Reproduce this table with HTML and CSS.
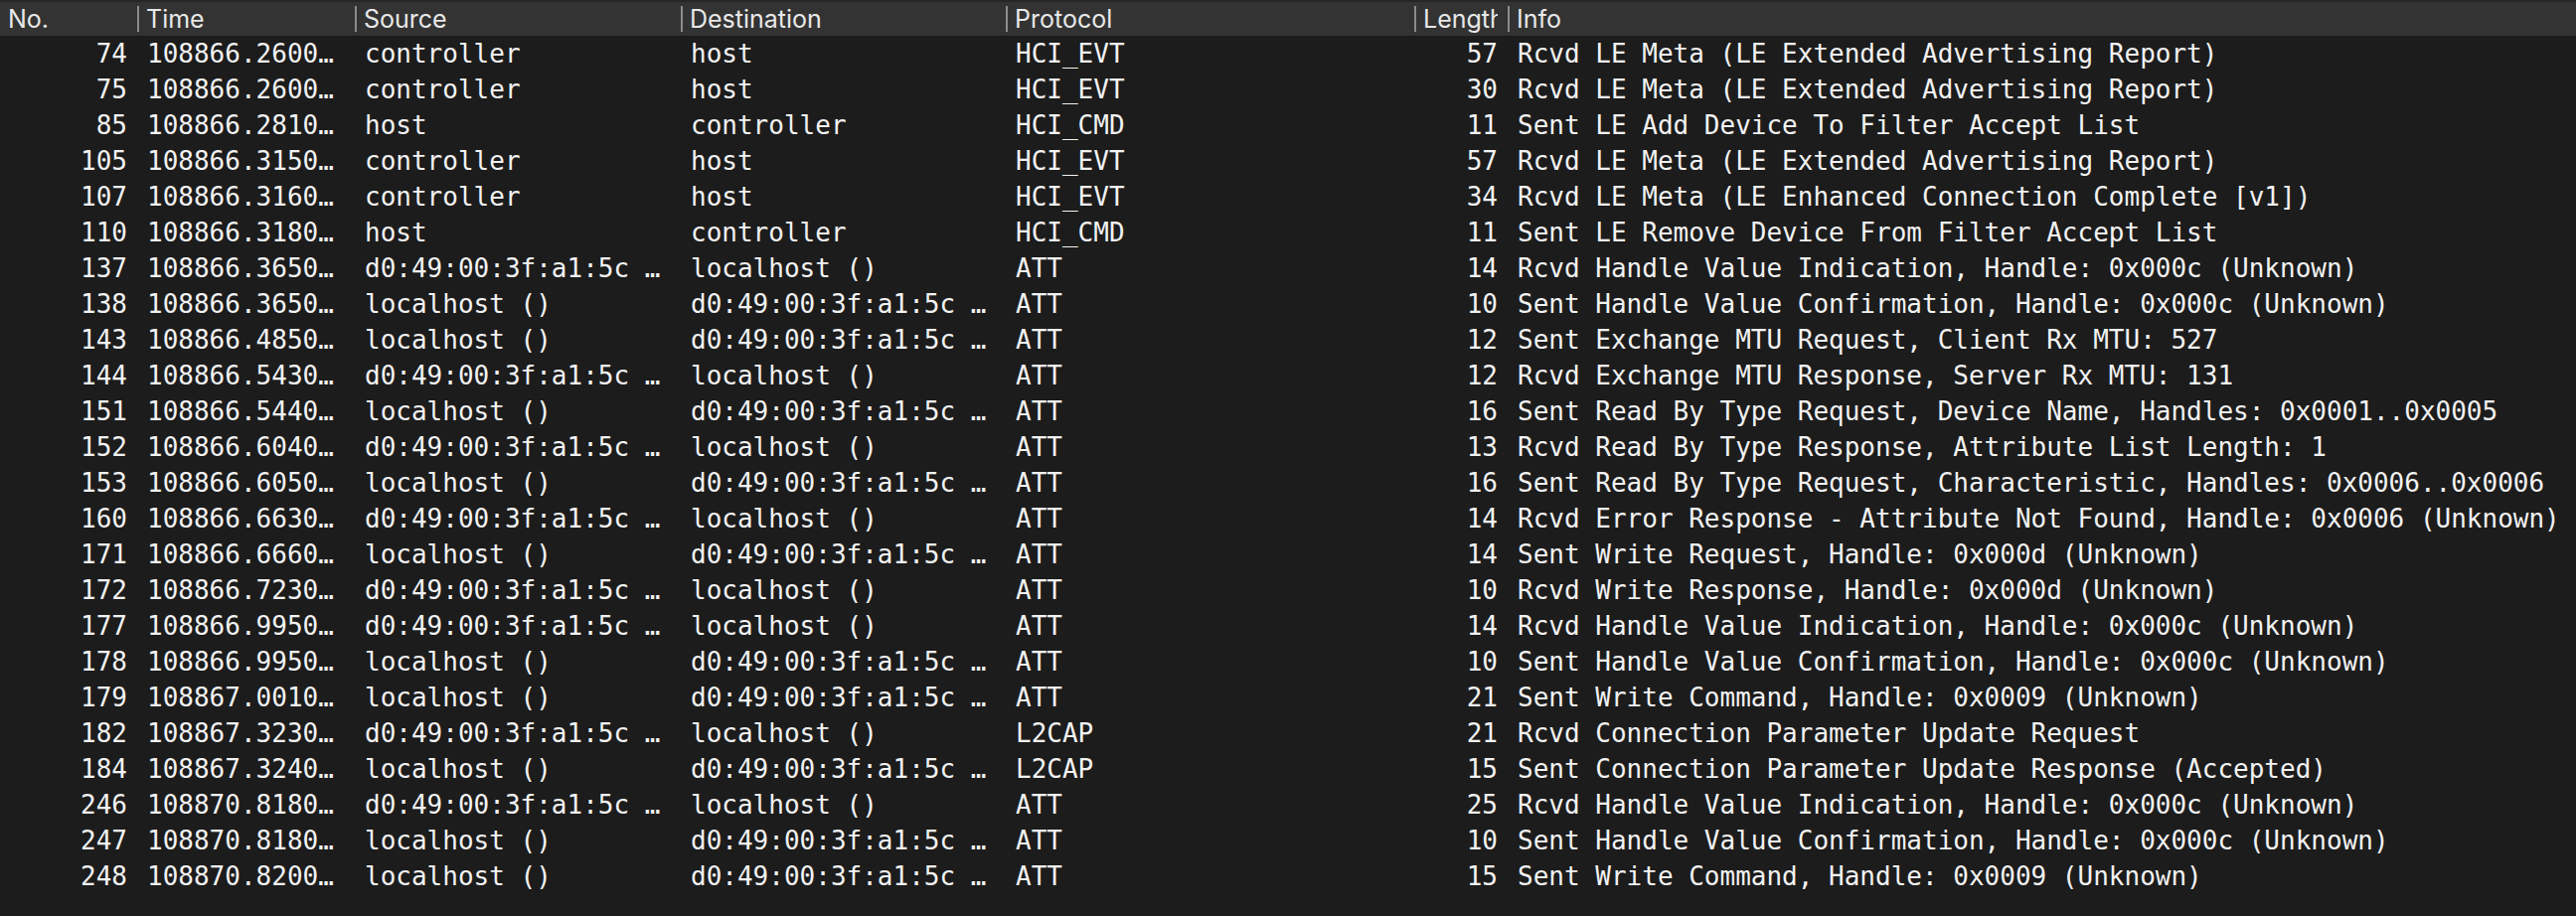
FILE: index.html
```html
<!DOCTYPE html>
<html lang="en">
<head>
<meta charset="utf-8">
<title>Packet list</title>
<link rel="stylesheet" href="styles.css">
</head>
<body>
<div class="packets">
  <div class="topline"></div>
  <div class="row head">
    <div class="h first">No.</div>
    <div class="h">Time</div>
    <div class="h">Source</div>
    <div class="h">Destination</div>
    <div class="h">Protocol</div>
    <div class="h narrow">Length</div>
    <div class="h">Info</div>
  </div>
  <div class="list">
    <div class="row"><span class="c num">74</span><span class="c">108866.2600…</span><span class="c">controller</span><span class="c">host</span><span class="c">HCI_EVT</span><span class="c num">57</span><span class="c">Rcvd LE Meta (LE Extended Advertising Report)</span></div>
    <div class="row"><span class="c num">75</span><span class="c">108866.2600…</span><span class="c">controller</span><span class="c">host</span><span class="c">HCI_EVT</span><span class="c num">30</span><span class="c">Rcvd LE Meta (LE Extended Advertising Report)</span></div>
    <div class="row"><span class="c num">85</span><span class="c">108866.2810…</span><span class="c">host</span><span class="c">controller</span><span class="c">HCI_CMD</span><span class="c num">11</span><span class="c">Sent LE Add Device To Filter Accept List</span></div>
    <div class="row"><span class="c num">105</span><span class="c">108866.3150…</span><span class="c">controller</span><span class="c">host</span><span class="c">HCI_EVT</span><span class="c num">57</span><span class="c">Rcvd LE Meta (LE Extended Advertising Report)</span></div>
    <div class="row"><span class="c num">107</span><span class="c">108866.3160…</span><span class="c">controller</span><span class="c">host</span><span class="c">HCI_EVT</span><span class="c num">34</span><span class="c">Rcvd LE Meta (LE Enhanced Connection Complete [v1])</span></div>
    <div class="row"><span class="c num">110</span><span class="c">108866.3180…</span><span class="c">host</span><span class="c">controller</span><span class="c">HCI_CMD</span><span class="c num">11</span><span class="c">Sent LE Remove Device From Filter Accept List</span></div>
    <div class="row"><span class="c num">137</span><span class="c">108866.3650…</span><span class="c">d0:49:00:3f:a1:5c …</span><span class="c">localhost ()</span><span class="c">ATT</span><span class="c num">14</span><span class="c">Rcvd Handle Value Indication, Handle: 0x000c (Unknown)</span></div>
    <div class="row"><span class="c num">138</span><span class="c">108866.3650…</span><span class="c">localhost ()</span><span class="c">d0:49:00:3f:a1:5c …</span><span class="c">ATT</span><span class="c num">10</span><span class="c">Sent Handle Value Confirmation, Handle: 0x000c (Unknown)</span></div>
    <div class="row"><span class="c num">143</span><span class="c">108866.4850…</span><span class="c">localhost ()</span><span class="c">d0:49:00:3f:a1:5c …</span><span class="c">ATT</span><span class="c num">12</span><span class="c">Sent Exchange MTU Request, Client Rx MTU: 527</span></div>
    <div class="row"><span class="c num">144</span><span class="c">108866.5430…</span><span class="c">d0:49:00:3f:a1:5c …</span><span class="c">localhost ()</span><span class="c">ATT</span><span class="c num">12</span><span class="c">Rcvd Exchange MTU Response, Server Rx MTU: 131</span></div>
    <div class="row"><span class="c num">151</span><span class="c">108866.5440…</span><span class="c">localhost ()</span><span class="c">d0:49:00:3f:a1:5c …</span><span class="c">ATT</span><span class="c num">16</span><span class="c">Sent Read By Type Request, Device Name, Handles: 0x0001..0x0005</span></div>
    <div class="row"><span class="c num">152</span><span class="c">108866.6040…</span><span class="c">d0:49:00:3f:a1:5c …</span><span class="c">localhost ()</span><span class="c">ATT</span><span class="c num">13</span><span class="c">Rcvd Read By Type Response, Attribute List Length: 1</span></div>
    <div class="row"><span class="c num">153</span><span class="c">108866.6050…</span><span class="c">localhost ()</span><span class="c">d0:49:00:3f:a1:5c …</span><span class="c">ATT</span><span class="c num">16</span><span class="c">Sent Read By Type Request, Characteristic, Handles: 0x0006..0x0006</span></div>
    <div class="row"><span class="c num">160</span><span class="c">108866.6630…</span><span class="c">d0:49:00:3f:a1:5c …</span><span class="c">localhost ()</span><span class="c">ATT</span><span class="c num">14</span><span class="c">Rcvd Error Response - Attribute Not Found, Handle: 0x0006 (Unknown)</span></div>
    <div class="row"><span class="c num">171</span><span class="c">108866.6660…</span><span class="c">localhost ()</span><span class="c">d0:49:00:3f:a1:5c …</span><span class="c">ATT</span><span class="c num">14</span><span class="c">Sent Write Request, Handle: 0x000d (Unknown)</span></div>
    <div class="row"><span class="c num">172</span><span class="c">108866.7230…</span><span class="c">d0:49:00:3f:a1:5c …</span><span class="c">localhost ()</span><span class="c">ATT</span><span class="c num">10</span><span class="c">Rcvd Write Response, Handle: 0x000d (Unknown)</span></div>
    <div class="row"><span class="c num">177</span><span class="c">108866.9950…</span><span class="c">d0:49:00:3f:a1:5c …</span><span class="c">localhost ()</span><span class="c">ATT</span><span class="c num">14</span><span class="c">Rcvd Handle Value Indication, Handle: 0x000c (Unknown)</span></div>
    <div class="row"><span class="c num">178</span><span class="c">108866.9950…</span><span class="c">localhost ()</span><span class="c">d0:49:00:3f:a1:5c …</span><span class="c">ATT</span><span class="c num">10</span><span class="c">Sent Handle Value Confirmation, Handle: 0x000c (Unknown)</span></div>
    <div class="row"><span class="c num">179</span><span class="c">108867.0010…</span><span class="c">localhost ()</span><span class="c">d0:49:00:3f:a1:5c …</span><span class="c">ATT</span><span class="c num">21</span><span class="c">Sent Write Command, Handle: 0x0009 (Unknown)</span></div>
    <div class="row"><span class="c num">182</span><span class="c">108867.3230…</span><span class="c">d0:49:00:3f:a1:5c …</span><span class="c">localhost ()</span><span class="c">L2CAP</span><span class="c num">21</span><span class="c">Rcvd Connection Parameter Update Request</span></div>
    <div class="row"><span class="c num">184</span><span class="c">108867.3240…</span><span class="c">localhost ()</span><span class="c">d0:49:00:3f:a1:5c …</span><span class="c">L2CAP</span><span class="c num">15</span><span class="c">Sent Connection Parameter Update Response (Accepted)</span></div>
    <div class="row"><span class="c num">246</span><span class="c">108870.8180…</span><span class="c">d0:49:00:3f:a1:5c …</span><span class="c">localhost ()</span><span class="c">ATT</span><span class="c num">25</span><span class="c">Rcvd Handle Value Indication, Handle: 0x000c (Unknown)</span></div>
    <div class="row"><span class="c num">247</span><span class="c">108870.8180…</span><span class="c">localhost ()</span><span class="c">d0:49:00:3f:a1:5c …</span><span class="c">ATT</span><span class="c num">10</span><span class="c">Sent Handle Value Confirmation, Handle: 0x000c (Unknown)</span></div>
    <div class="row"><span class="c num">248</span><span class="c">108870.8200…</span><span class="c">localhost ()</span><span class="c">d0:49:00:3f:a1:5c …</span><span class="c">ATT</span><span class="c num">15</span><span class="c">Sent Write Command, Handle: 0x0009 (Unknown)</span></div>
  </div>
</div>
</body>
</html>
```
FILE: styles.css
```css
html, body {
  margin: 0;
  padding: 0;
  background: #1c1c1c;
}

.packets {
  width: 2592px;
  min-height: 922px;
  background: #1c1c1c;
  color: #f2f2f2;
}

.topline {
  height: 2px;
  background: #262626;
}

.row {
  display: grid;
  grid-template-columns: 138px 219px 328px 327px 411px 94px 1fr;
}

.head {
  height: 34px;
  background: #333333;
  align-items: center;
  font-family: Inter, "Liberation Sans", sans-serif;
  font-size: 25px;
  color: #e8e8e8;
}

.h {
  display: flex;
  align-items: center;
  height: 26px;
  border-left: 2px solid #8c8c8c;
  padding-left: 7px;
  white-space: nowrap;
}

.h.first {
  border-left: none;
  padding-left: 8px;
}

.h.narrow {
  margin-right: 10px;
  overflow-x: clip;
  overflow-y: visible;
}

.list {
  font-family: "DejaVu Sans Mono", "Liberation Mono", monospace;
  font-size: 26px;
  line-height: 36px;
}

.list .row {
  height: 36px;
}

.c {
  padding: 0 10px;
  white-space: pre;
  overflow: hidden;
}

.c.num {
  text-align: right;
}
```
